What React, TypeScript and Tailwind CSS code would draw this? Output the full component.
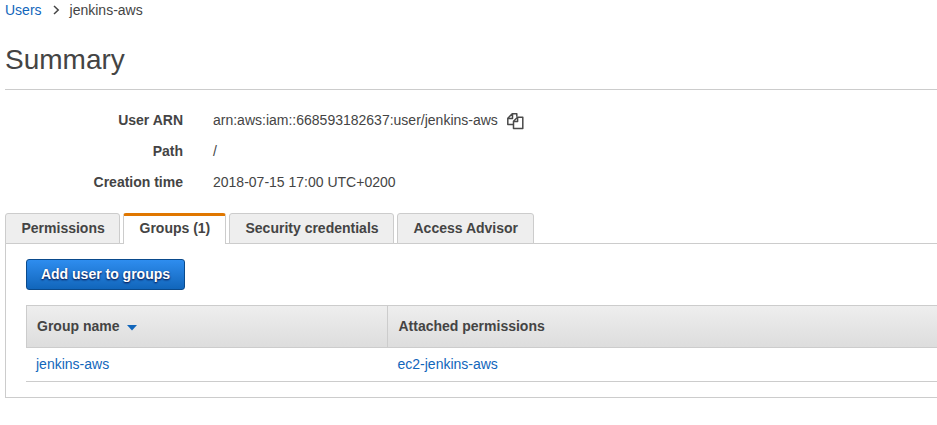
import React from "react";

const tabs = [
  { label: "Permissions", width: "w-[115px]" },
  { label: "Groups (1)", width: "w-[103px]", active: true },
  { label: "Security credentials", width: "w-[165px]" },
  { label: "Access Advisor", width: "w-[137px]" },
];

function CopyIcon() {
  return (
    <svg width="17" height="17" viewBox="0 0 17 17" fill="none" stroke="#4a4a4a" strokeWidth="1.5" strokeLinejoin="round" className="ml-[9px] mt-[3px]">
      <path d="M6 11.5H.8V5.2L5.2 .8h4.6v3M5.5 .9v4.6H.8" />
      <path d="M10.5 4.2H15.8V15.6H6.5V8.2z" fill="#fff" />
      <path d="M10.6 4.2v4.3H6.5" />
    </svg>
  );
}

function Row({ label, children }: { label: string; children: React.ReactNode }) {
  return (
    <div className="flex h-[31px] items-center">
      <div className="w-[183px] text-right font-bold">{label}</div>
      <div className="ml-[30px] flex items-center">{children}</div>
    </div>
  );
}

export default function App() {
  return (
    <div className="h-[425px] w-[937px] overflow-hidden bg-white pl-[5px] font-['Liberation_Sans',Arial,sans-serif] text-[14px] leading-5 text-[#444]">
      <nav className="flex h-5 items-center">
        <a className="text-[#1166bb]">Users</a>
        <svg width="7" height="10" viewBox="0 0 7 10" fill="none" stroke="#444" strokeWidth="1.5" className="ml-[11px] mr-[10px]">
          <path d="M1 1l4.2 4L1 9" />
        </svg>
        <span>jenkins-aws</span>
      </nav>
      <h1 className="mt-5 h-[50px] border-b border-[#ccc] text-[28px] leading-[40px]">Summary</h1>
      <div className="-ml-[5px] mt-[14px]">
        <Row label="User ARN">
          arn:aws:iam::668593182637:user/jenkins-aws
          <CopyIcon />
        </Row>
        <Row label="Path">/</Row>
        <Row label="Creation time">2018-07-15 17:00 UTC+0200</Row>
      </div>
      <div className="mt-4 flex h-[31px] gap-[3px]">
        {tabs.map((t) =>
          t.active ? (
            <div key={t.label} className={`${t.width} z-10 h-[31px] rounded-t-[3px] border-x border-t-3 border-x-[#ccc] border-t-[#e07700] bg-white pl-[15.5px] font-bold leading-[25px]`}>
              {t.label}
            </div>
          ) : (
            <div key={t.label} className={`${t.width} h-[31px] rounded-t-[3px] border border-[#ccc] bg-[#eee] pl-[15.5px] font-bold leading-[29px]`}>
              {t.label}
            </div>
          )
        )}
      </div>
      <section className="-mt-px h-[155px] border border-r-0 border-[#ccc] pl-5 pt-[15px]">
        <button className="block h-[31px] w-[159px] rounded-[3px] border border-[#0a4a8c] bg-linear-to-b from-[#2e8def] to-[#1166bb] text-center font-bold leading-[29px] text-white [text-shadow:0_1px_2px_#003]">
          Add user to groups
        </button>
        <div className="mt-[15px] flex h-[43px] border border-r-0 border-[#ccc] bg-linear-to-b from-[#eee] to-[#ddd] font-bold leading-[41px]">
          <div className="flex w-[361px] items-center border-r border-[#ccc] pl-[10px]">
            Group name
            <svg width="10" height="6" viewBox="0 0 10 6" className="ml-2 mt-[2px]">
              <path d="M0 0h10L5 5.6z" fill="#1166bb" />
            </svg>
          </div>
          <div className="pl-[10.5px]">Attached permissions</div>
        </div>
        <div className="flex h-[34px] border-b border-[#ccc] leading-[33px] text-[#1166bb]">
          <a className="w-[361px] pl-[10px]">jenkins-aws</a>
          <a className="pl-[10.5px]">ec2-jenkins-aws</a>
        </div>
      </section>
    </div>
  );
}
